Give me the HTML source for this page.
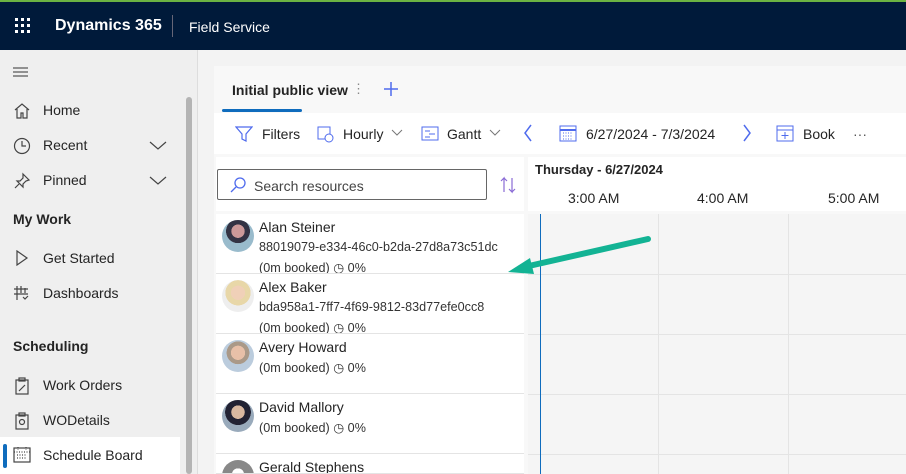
<!DOCTYPE html>
<html><head><meta charset="utf-8"><style>
*{box-sizing:border-box;margin:0;padding:0}
html,body{width:906px;height:474px;overflow:hidden}
body{font-family:"Segoe UI","Liberation Sans",sans-serif;background:#f3f3f3;position:relative;color:#242424}
.a{position:absolute}
.top{left:0;top:0;width:906px;height:50px;background:#001a3a;border-top:2px solid #6bb342}
.side{left:0;top:50px;width:198px;height:424px;background:#efefef;border-right:1px solid #ddd}
.nav{font-size:14px;color:#242424}
.hdr{font-size:14px;font-weight:600}
.ico{stroke:#444;fill:none;stroke-width:1.2}
.row{left:216px;width:308px;height:60px;background:#fff;border-bottom:1px solid #e4e4e4;overflow:hidden}
.row .n{position:absolute;left:43px;top:5px;font-size:14px}
.row .s{position:absolute;left:43px;font-size:12.6px;color:#333}
.av{position:absolute;left:6px;top:6px;width:32px;height:32px;border-radius:50%}
</style></head><body>
<div class="a top">
 <svg class="a" style="left:14px;top:15px" width="18" height="18"><g fill="#fff"><rect x="1" y="1" width="3" height="3"/><rect x="7" y="1" width="3" height="3"/><rect x="13" y="1" width="3" height="3"/><rect x="1" y="7" width="3" height="3"/><rect x="7" y="7" width="3" height="3"/><rect x="13" y="7" width="3" height="3"/><rect x="1" y="13" width="3" height="3"/><rect x="7" y="13" width="3" height="3"/><rect x="13" y="13" width="3" height="3"/></g></svg>
 <div class="a" style="left:55px;top:15px;color:#fff;font-size:16px;font-weight:600">Dynamics 365</div>
 <div class="a" style="left:172px;top:13px;width:1px;height:22px;background:#667"></div>
 <div class="a" style="left:189px;top:17px;color:#fff;font-size:14px">Field Service</div>
</div>
<div class="a side"></div>
<div class="a" style="left:186px;top:97px;width:6px;height:377px;background:#b4b4b4;border-radius:3px"></div>
<svg class="a" style="left:12px;top:66px" width="18" height="12"><path d="M1 2h15M1 6h15M1 10h15" stroke="#333" stroke-width="1"/></svg>
<svg class="a ico" style="left:13px;top:102px" width="18" height="18"><path d="M2 8L9 2l7 6M4 7v9h4v-5h2v5h4V7"/></svg>
<div class="a nav" style="left:43px;top:102px">Home</div>
<svg class="a ico" style="left:13px;top:137px" width="18" height="18"><circle cx="9" cy="9" r="7.5"/><path d="M9 4v5h4"/></svg>
<div class="a nav" style="left:43px;top:137px">Recent</div>
<svg class="a ico" style="left:149px;top:141px" width="18" height="10"><path d="M1 1l8 7 8-7"/></svg>
<svg class="a ico" style="left:13px;top:172px" width="18" height="18"><path d="M10 2l6 6-3 1-3 3 0 3-6-6 3 0 3-3zM6 12l-4 4"/></svg>
<div class="a nav" style="left:43px;top:172px">Pinned</div>
<svg class="a ico" style="left:149px;top:176px" width="18" height="10"><path d="M1 1l8 7 8-7"/></svg>
<div class="a hdr" style="left:13px;top:211px">My Work</div>
<svg class="a ico" style="left:15px;top:250px" width="14" height="16"><path d="M2 1l10 7-10 7z"/></svg>
<div class="a nav" style="left:43px;top:250px">Get Started</div>
<svg class="a ico" style="left:13px;top:285px" width="16" height="16"><path d="M1 4h14M1 9h14M4 1v14M8 1v7M12 3v5M10 12l2 2 3-3"/></svg>
<div class="a nav" style="left:43px;top:285px">Dashboards</div>
<div class="a hdr" style="left:13px;top:338px">Scheduling</div>
<svg class="a ico" style="left:15px;top:377px" width="14" height="18"><rect x="1" y="3" width="12" height="14"/><rect x="4" y="1" width="6" height="3"/><path d="M4 14l6-6"/></svg>
<div class="a nav" style="left:43px;top:377px">Work Orders</div>
<svg class="a ico" style="left:15px;top:412px" width="14" height="18"><rect x="1" y="3" width="12" height="14"/><rect x="4" y="1" width="6" height="3"/><circle cx="7" cy="10" r="2.5"/></svg>
<div class="a nav" style="left:43px;top:412px">WODetails</div>
<div class="a" style="left:0;top:437px;width:180px;height:37px;background:#fff"></div>
<div class="a" style="left:3px;top:444px;width:4px;height:24px;background:#0f6cbd;border-radius:2px"></div>
<svg class="a ico" style="left:13px;top:446px" width="18" height="18"><rect x="1" y="2" width="16" height="14"/><path d="M1 6h16M5 1v3M13 1v3M4 9h10M4 12h10" stroke-dasharray="1 1.5"/></svg>
<div class="a nav" style="left:43px;top:447px">Schedule Board</div>

<div class="a" style="left:214px;top:66px;width:692px;height:408px;background:#f8f8f8"></div>
<div class="a" style="left:232px;top:82px;font-size:14px;font-weight:600">Initial public view</div>
<div class="a" style="left:352px;top:81px;color:#888;font-size:13px">⋮</div>
<svg class="a" style="left:383px;top:81px" width="16" height="16"><path d="M8 1v14M1 8h14" stroke="#4f6bed" stroke-width="1.5"/></svg>
<div class="a" style="left:222px;top:109px;width:80px;height:3px;background:#0f6cbd;border-radius:2px"></div>
<div class="a" style="left:214px;top:113px;width:692px;height:41px;background:#fff"></div>
<svg class="a" style="left:235px;top:125px" width="18" height="18"><path d="M1 2h16l-6 7v7l-4-2V9z" fill="none" stroke="#4f6bed" stroke-width="1.2"/></svg>
<div class="a" style="left:262px;top:126px;font-size:14px">Filters</div>
<svg class="a" style="left:317px;top:125px" width="18" height="18"><rect x="1" y="2" width="12" height="12" fill="none" stroke="#4f6bed"/><circle cx="12" cy="13" r="4" fill="#fff" stroke="#4f6bed"/></svg>
<div class="a" style="left:343px;top:126px;font-size:14px">Hourly</div>
<svg class="a" style="left:391px;top:129px" width="12" height="8"><path d="M1 1l5 5 5-5" fill="none" stroke="#777"/></svg>
<svg class="a" style="left:421px;top:126px" width="18" height="16"><rect x="1" y="1" width="16" height="13" fill="none" stroke="#4f6bed"/><path d="M4 5h5M8 8h6M4 11h5" stroke="#4f6bed"/></svg>
<div class="a" style="left:447px;top:126px;font-size:14px">Gantt</div>
<svg class="a" style="left:489px;top:129px" width="12" height="8"><path d="M1 1l5 5 5-5" fill="none" stroke="#777"/></svg>
<svg class="a" style="left:523px;top:124px" width="10" height="18"><path d="M8 1L2 9l6 8" fill="none" stroke="#4f6bed" stroke-width="1.5"/></svg>
<svg class="a" style="left:559px;top:124px" width="18" height="18"><rect x="1" y="2" width="16" height="15" fill="none" stroke="#4f6bed"/><path d="M1 6h16" stroke="#4f6bed" stroke-width="2"/><path d="M4 9h10M4 12h10M4 15h10" stroke="#4f6bed" stroke-dasharray="1 1.5"/></svg>
<div class="a" style="left:586px;top:126px;font-size:14px">6/27/2024 - 7/3/2024</div>
<svg class="a" style="left:742px;top:124px" width="10" height="18"><path d="M2 1l6 8-6 8" fill="none" stroke="#4f6bed" stroke-width="1.5"/></svg>
<svg class="a" style="left:776px;top:124px" width="18" height="18"><rect x="1" y="2" width="16" height="15" fill="none" stroke="#4f6bed"/><path d="M1 6h16M9 8v7M5.5 11.5h7" stroke="#4f6bed"/></svg>
<div class="a" style="left:803px;top:126px;font-size:14px">Book</div>
<div class="a" style="left:853px;top:126px;font-size:14px;color:#555">···</div>

<div class="a" style="left:216px;top:157px;width:308px;height:54px;background:#fff"></div>
<div class="a" style="left:217px;top:169px;width:270px;height:31px;border:1px solid #666;border-radius:2px;background:#fff"></div>
<svg class="a" style="left:229px;top:176px" width="18" height="18"><circle cx="11" cy="7" r="5" fill="none" stroke="#4f6bed" stroke-width="1.3"/><path d="M7 11l-5 5" stroke="#4f6bed" stroke-width="1.3"/></svg>
<div class="a" style="left:254px;top:178px;font-size:14px;color:#444">Search resources</div>
<svg class="a" style="left:500px;top:176px" width="16" height="18"><path d="M4 16V2L1 5M4 2l3 3M12 2v14l-3-3M12 16l3-3" fill="none" stroke="#8a6bd6" stroke-width="1.2"/></svg>
<div class="a" style="left:528px;top:157px;width:378px;height:54px;background:#fff"></div>
<div class="a" style="left:535px;top:162px;font-size:13px;font-weight:600">Thursday - 6/27/2024</div>
<div class="a" style="left:568px;top:190px;font-size:14px">3:00 AM</div>
<div class="a" style="left:697px;top:190px;font-size:14px">4:00 AM</div>
<div class="a" style="left:828px;top:190px;font-size:14px">5:00 AM</div>

<div class="a" style="left:528px;top:214px;width:378px;height:260px;background:#f5f5f5"></div>
<div class="a" style="left:658px;top:214px;width:1px;height:260px;background:#e4e4e4"></div>
<div class="a" style="left:788px;top:214px;width:1px;height:260px;background:#e4e4e4"></div>
<div class="a" style="left:528px;top:274px;width:378px;height:1px;background:#e4e4e4"></div>
<div class="a" style="left:528px;top:334px;width:378px;height:1px;background:#e4e4e4"></div>
<div class="a" style="left:528px;top:394px;width:378px;height:1px;background:#e4e4e4"></div>
<div class="a" style="left:528px;top:454px;width:378px;height:1px;background:#e4e4e4"></div>
<div class="a" style="left:540px;top:214px;width:1px;height:260px;background:#0f6cbd"></div>

<div class="a row" style="top:214px"><div class="av" style="background:radial-gradient(circle at 50% 35%,#c99 0 25%,#334 26% 45%,#9bc 46%)"></div><div class="n">Alan Steiner</div><div class="s" style="top:26px">88019079-e334-46c0-b2da-27d8a73c51dc</div><div class="s" style="top:46px">(0m booked) ◷ 0%</div></div>
<div class="a row" style="top:274px"><div class="av" style="background:radial-gradient(circle at 50% 40%,#f0d0b8 0 28%,#e8d7a8 29% 50%,#eee 51%)"></div><div class="n">Alex Baker</div><div class="s" style="top:26px">bda958a1-7ff7-4f69-9812-83d77efe0cc8</div><div class="s" style="top:46px">(0m booked) ◷ 0%</div></div>
<div class="a row" style="top:334px"><div class="av" style="background:radial-gradient(circle at 50% 40%,#e8c0a8 0 28%,#a98 29% 45%,#bcd 46%)"></div><div class="n">Avery Howard</div><div class="s" style="top:26px">(0m booked) ◷ 0%</div></div>
<div class="a row" style="top:394px"><div class="av" style="background:radial-gradient(circle at 50% 38%,#d9b8a0 0 26%,#223 27% 50%,#9ab 51%)"></div><div class="n">David Mallory</div><div class="s" style="top:26px">(0m booked) ◷ 0%</div></div>
<div class="a row" style="top:454px;height:20px"><div class="av" style="background:radial-gradient(circle at 50% 45%,#fff 0 25%,#888 26%)"></div><div class="n">Gerald Stephens</div></div>

<svg class="a" style="left:500px;top:230px" width="160" height="50"><path d="M148 9L20 38" stroke="#13b394" stroke-width="6" stroke-linecap="round"/><path d="M8 42l22-14 4 16z" fill="#13b394"/></svg>
</body></html>
